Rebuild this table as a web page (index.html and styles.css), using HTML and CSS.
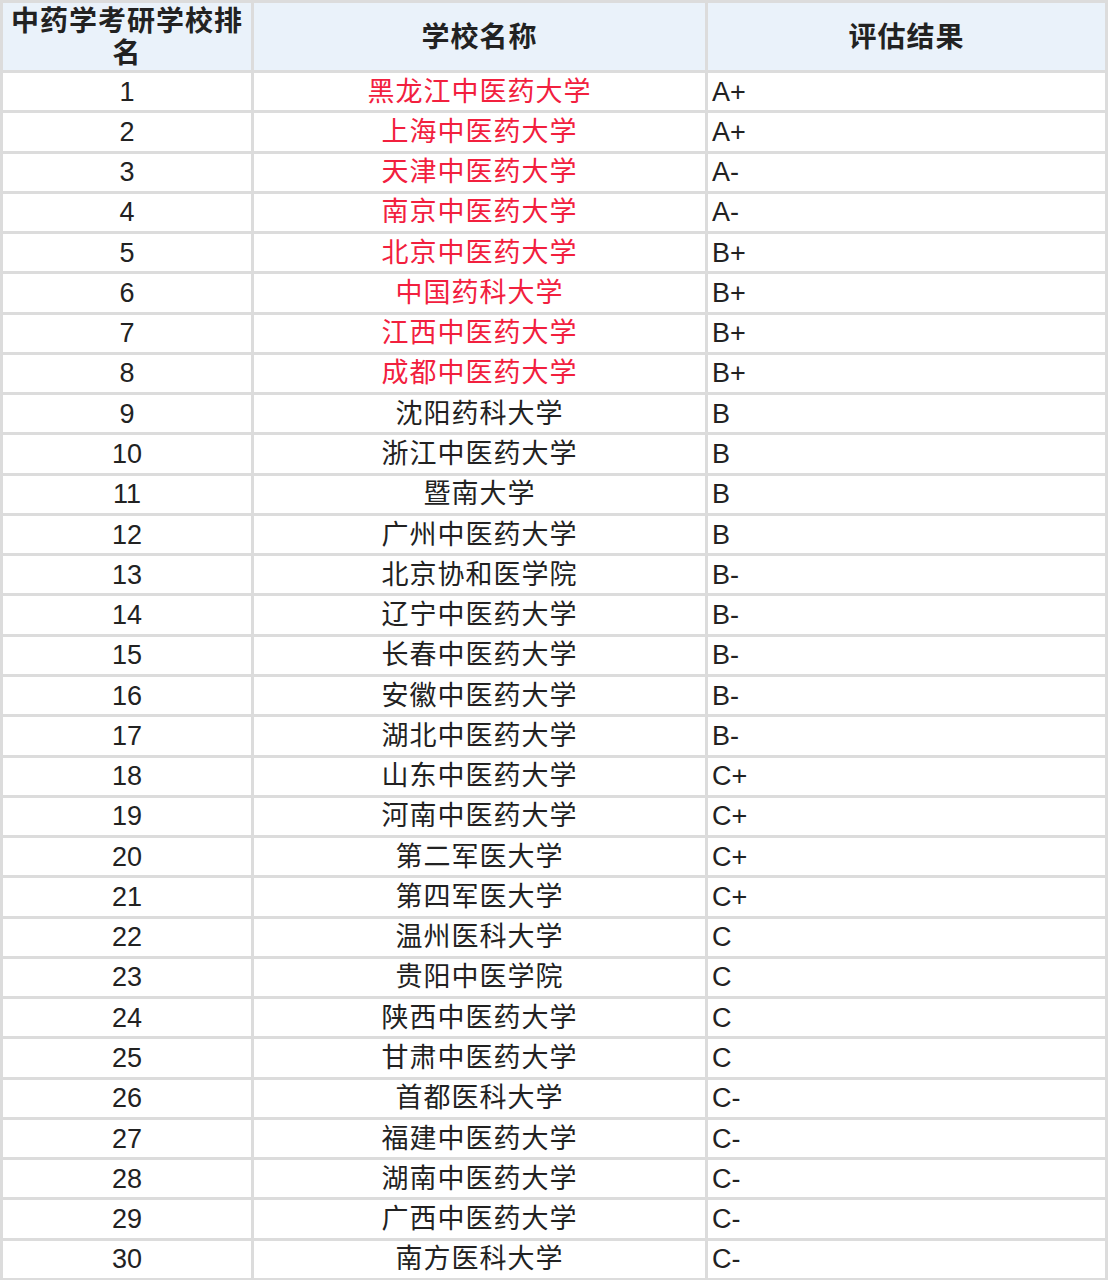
FILE: index.html
```html
<!DOCTYPE html>
<html lang="zh">
<head>
<meta charset="utf-8">
<title>中药学考研学校排名</title>
<link rel="stylesheet" href="styles.css">
</head>
<body>
<table class="rank">
<colgroup><col class="c1"><col class="c2"><col class="c3"></colgroup>
<thead>
<tr><th>中药学考研学校排名</th><th>学校名称</th><th>评估结果</th></tr>
</thead>
<tbody>
<tr><td class="num">1</td><td class="name hot">黑龙江中医药大学</td><td class="grade">A+</td></tr>
<tr><td class="num">2</td><td class="name hot">上海中医药大学</td><td class="grade">A+</td></tr>
<tr><td class="num">3</td><td class="name hot">天津中医药大学</td><td class="grade">A-</td></tr>
<tr><td class="num">4</td><td class="name hot">南京中医药大学</td><td class="grade">A-</td></tr>
<tr><td class="num">5</td><td class="name hot">北京中医药大学</td><td class="grade">B+</td></tr>
<tr><td class="num">6</td><td class="name hot">中国药科大学</td><td class="grade">B+</td></tr>
<tr><td class="num">7</td><td class="name hot">江西中医药大学</td><td class="grade">B+</td></tr>
<tr><td class="num">8</td><td class="name hot">成都中医药大学</td><td class="grade">B+</td></tr>
<tr><td class="num">9</td><td class="name">沈阳药科大学</td><td class="grade">B</td></tr>
<tr><td class="num">10</td><td class="name">浙江中医药大学</td><td class="grade">B</td></tr>
<tr><td class="num">11</td><td class="name">暨南大学</td><td class="grade">B</td></tr>
<tr><td class="num">12</td><td class="name">广州中医药大学</td><td class="grade">B</td></tr>
<tr><td class="num">13</td><td class="name">北京协和医学院</td><td class="grade">B-</td></tr>
<tr><td class="num">14</td><td class="name">辽宁中医药大学</td><td class="grade">B-</td></tr>
<tr><td class="num">15</td><td class="name">长春中医药大学</td><td class="grade">B-</td></tr>
<tr><td class="num">16</td><td class="name">安徽中医药大学</td><td class="grade">B-</td></tr>
<tr><td class="num">17</td><td class="name">湖北中医药大学</td><td class="grade">B-</td></tr>
<tr><td class="num">18</td><td class="name">山东中医药大学</td><td class="grade">C+</td></tr>
<tr><td class="num">19</td><td class="name">河南中医药大学</td><td class="grade">C+</td></tr>
<tr><td class="num">20</td><td class="name">第二军医大学</td><td class="grade">C+</td></tr>
<tr><td class="num">21</td><td class="name">第四军医大学</td><td class="grade">C+</td></tr>
<tr><td class="num">22</td><td class="name">温州医科大学</td><td class="grade">C</td></tr>
<tr><td class="num">23</td><td class="name">贵阳中医学院</td><td class="grade">C</td></tr>
<tr><td class="num">24</td><td class="name">陕西中医药大学</td><td class="grade">C</td></tr>
<tr><td class="num">25</td><td class="name">甘肃中医药大学</td><td class="grade">C</td></tr>
<tr><td class="num">26</td><td class="name">首都医科大学</td><td class="grade">C-</td></tr>
<tr><td class="num">27</td><td class="name">福建中医药大学</td><td class="grade">C-</td></tr>
<tr><td class="num">28</td><td class="name">湖南中医药大学</td><td class="grade">C-</td></tr>
<tr><td class="num">29</td><td class="name">广西中医药大学</td><td class="grade">C-</td></tr>
<tr><td class="num">30</td><td class="name">南方医科大学</td><td class="grade">C-</td></tr>
</tbody>
</table>
</body>
</html>
```
FILE: styles.css
```css
html, body {
  margin: 0;
  padding: 0;
  background: #ffffff;
}

.rank {
  width: 1108px;
  table-layout: fixed;
  border-collapse: separate;
  border-spacing: 3px;
  background: #dcdcdc;
  font-family: "Liberation Sans", "Noto Sans CJK SC", sans-serif;
  color: #222222;
}

.c1 { width: 248px; }
.c2 { width: 451px; }
.c3 { width: 397px; }

.rank th {
  height: 63px;
  padding: 3px 2px 0;
  background: #eaf2fa;
  font-size: 28px;
  font-weight: bold;
  line-height: 32px;
  letter-spacing: 1px;
  color: #222222;
  text-align: center;
  vertical-align: middle;
  word-break: break-all;
}

.rank td {
  height: 37.27px;
  padding: 0;
  background: #ffffff;
  font-size: 27px;
  line-height: 30px;
  vertical-align: middle;
}

.num { text-align: center; }

.name {
  text-align: center;
  letter-spacing: 1px;
}

.hot { color: #f2203e; }

.rank td.grade {
  text-align: left;
  padding-left: 4px;
}
```
